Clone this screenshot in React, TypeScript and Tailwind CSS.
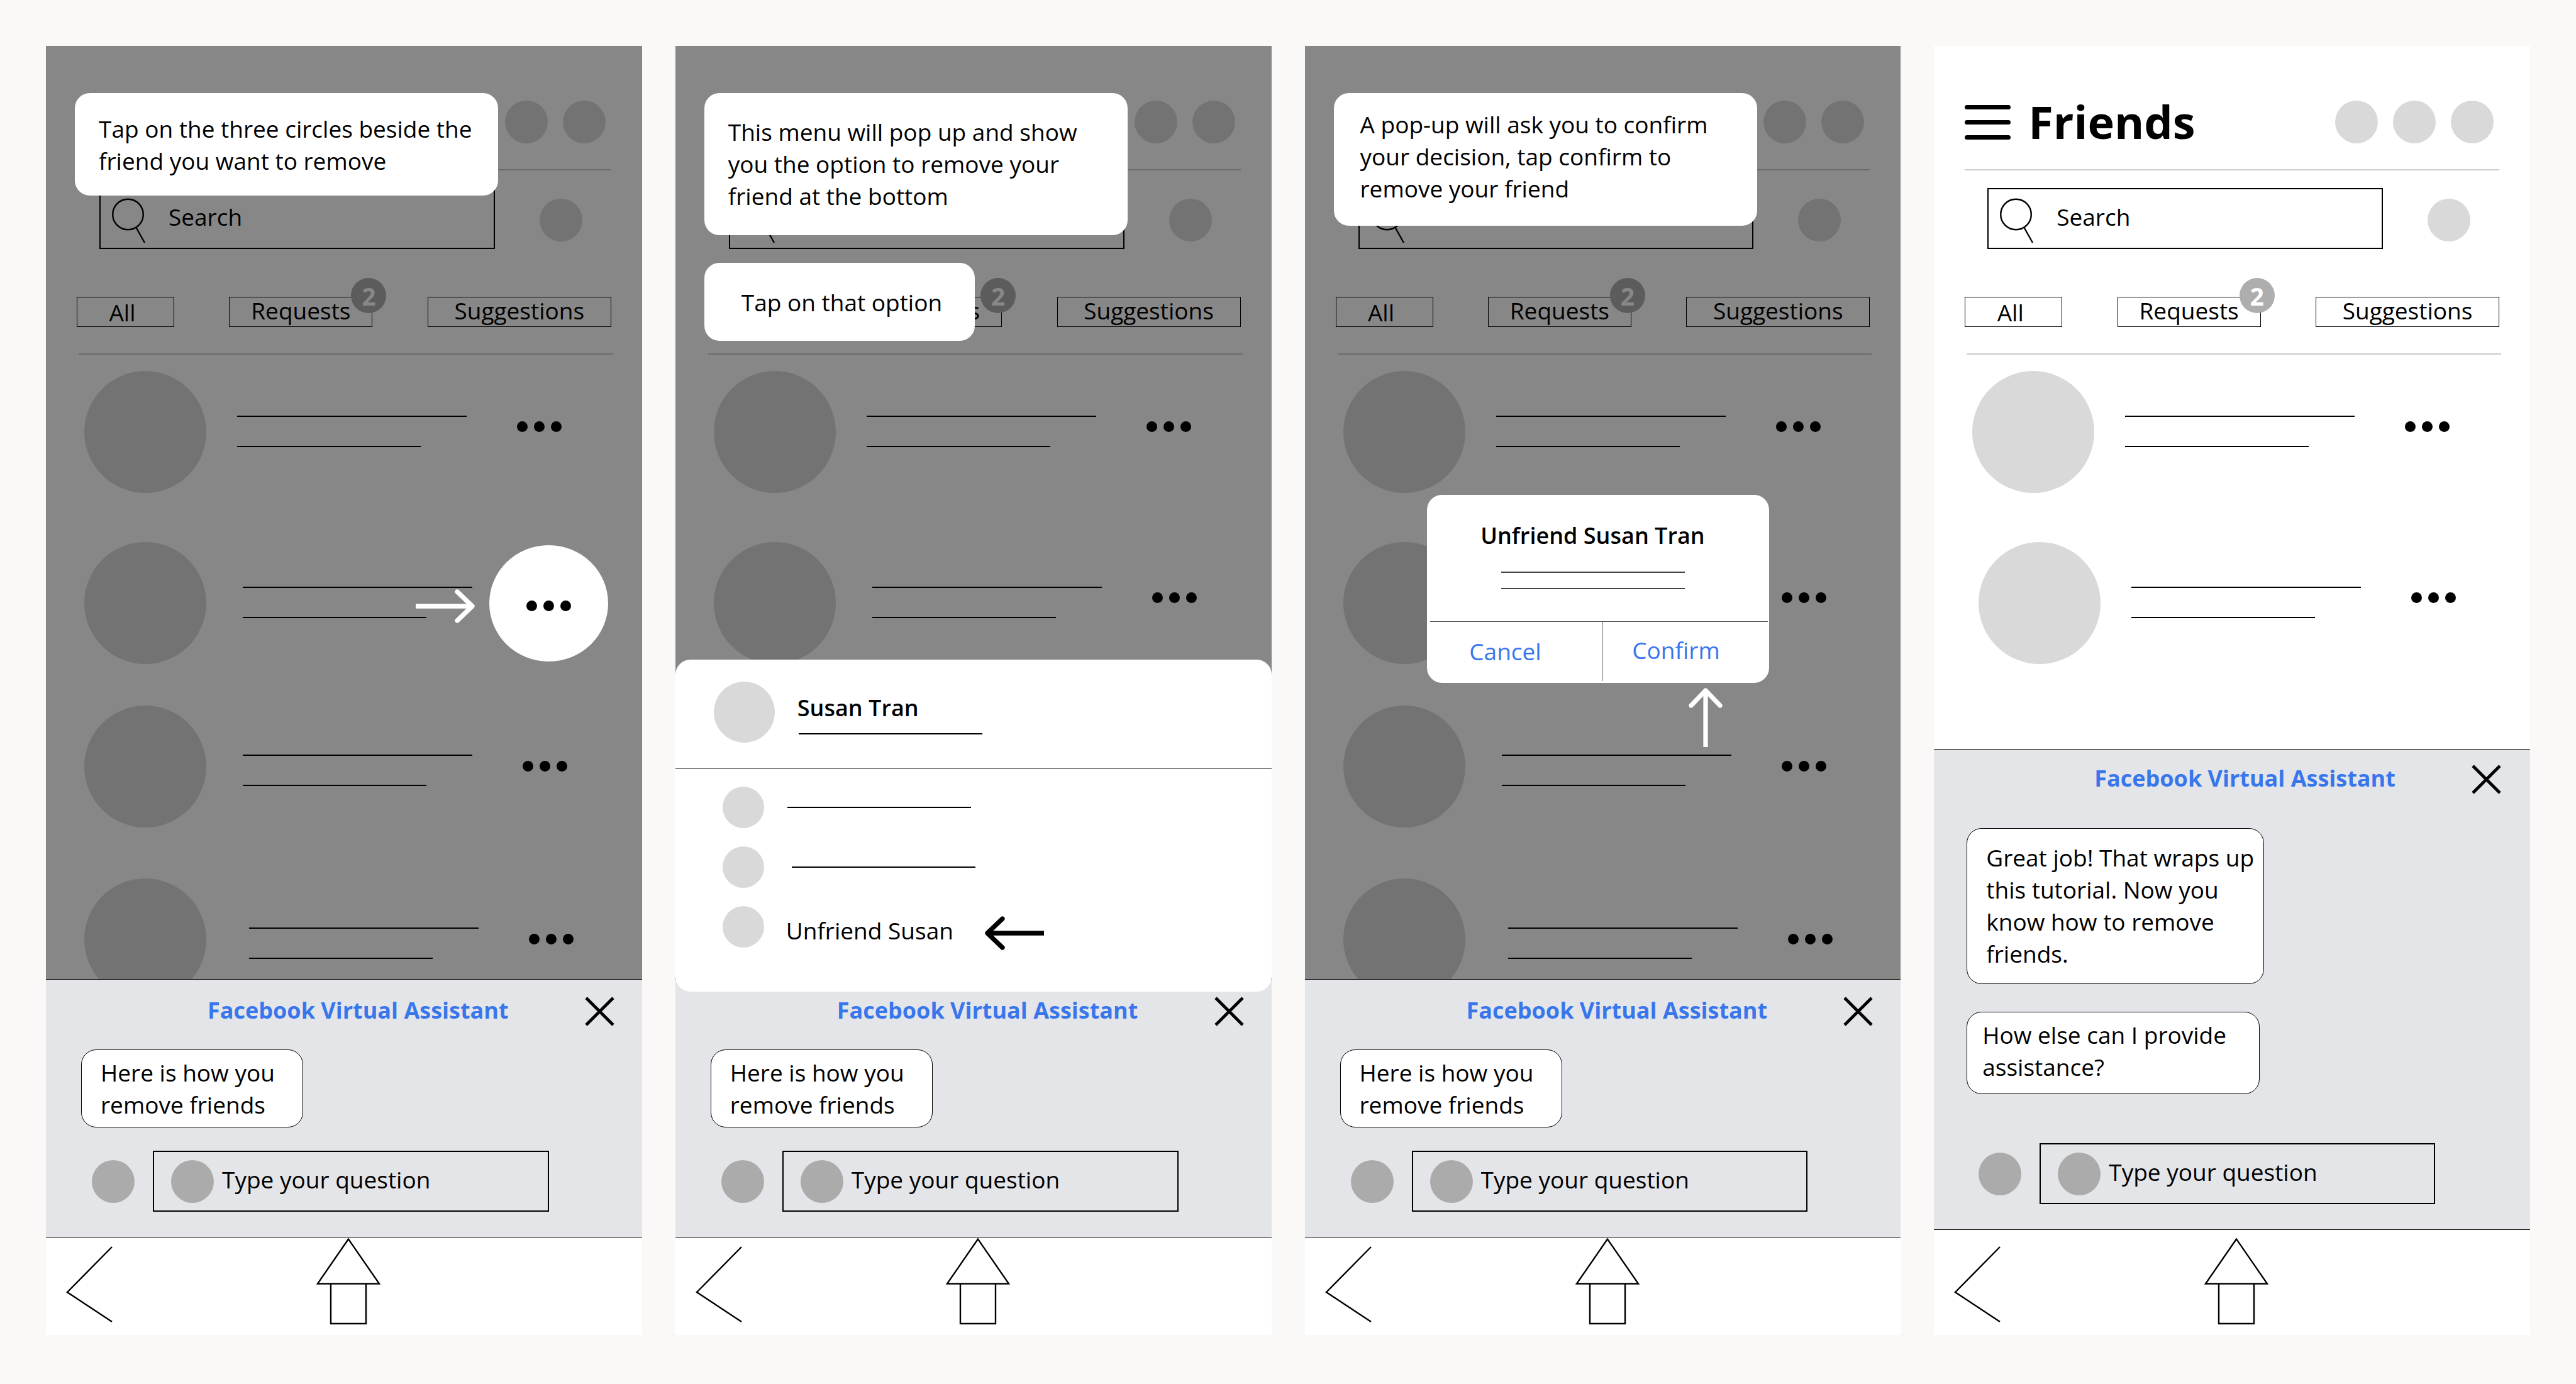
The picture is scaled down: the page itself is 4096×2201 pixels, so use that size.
import { type ReactNode } from "react";

type RowSpec = { row: string; textGap: string; textTop: string; dots: string };

const feedRows: RowSpec[] = [
  { row: "ml-[61px] mt-[26px]", textGap: "ml-[49px]", textTop: "mt-[71px]", dots: "mt-[80px]" },
  { row: "ml-[61px] mt-[78px]", textGap: "ml-[58px]", textTop: "mt-[71px]", dots: "mt-[80px]" },
  { row: "ml-[61px] mt-[66px]", textGap: "ml-[58px]", textTop: "mt-[78px]", dots: "mt-[88px]" },
  { row: "ml-[61px] mt-[81px]", textGap: "ml-[68px]", textTop: "mt-[78px]", dots: "mt-[88px]" },
];

const finalRows: RowSpec[] = [
  feedRows[0],
  { row: "ml-[71px] mt-[78px]", textGap: "ml-[49px]", textTop: "mt-[71px]", dots: "mt-[80px]" },
];

function Dots() {
  return (
    <span className="flex gap-[10px]">
      <span className="size-[17px] rounded-full bg-black" />
      <span className="size-[17px] rounded-full bg-black" />
      <span className="size-[17px] rounded-full bg-black" />
    </span>
  );
}

function Arrow({ direction, className }: { direction: "left" | "right" | "up"; className: string }) {
  const up = direction === "up";
  const shaft = { right: "M0 27H90", left: "M94 27H4", up: "M27 94V4" }[direction];
  const head = {
    right: "M66 4L90 27L66 50",
    left: "M28 4L4 27L28 50",
    up: "M4 28L27 4L50 28",
  }[direction];
  return (
    <svg
      aria-hidden="true"
      width={up ? 54 : 94}
      height={up ? 94 : 54}
      viewBox={up ? "0 0 54 94" : "0 0 94 54"}
      fill="none"
      stroke="currentColor"
      strokeWidth="7.3"
      className={className}
    >
      <path d={shaft} />
      <path d={head} strokeLinecap="round" strokeLinejoin="round" />
    </svg>
  );
}

function FeedHeader({ titled }: { titled: boolean }) {
  return (
    <header>
      <div className="flex h-[68px] items-center pl-[49px] pr-[58px]">
        {titled && (
          <>
            <button type="button" aria-label="Menu" className="flex w-[73px] flex-col gap-[17px]">
              <span className="h-[7px] rounded-full bg-black" />
              <span className="h-[7px] rounded-full bg-black" />
              <span className="h-[7px] rounded-full bg-black" />
            </button>
            <h1 className="ml-[28px] pb-[2px] text-[72px] leading-[66px] font-bold">Friends</h1>
          </>
        )}
        <div className="ml-auto flex gap-[24px]">
          <span className="size-[68px] rounded-full bg-[#d9d9d9]" />
          <span className="size-[68px] rounded-full bg-[#d9d9d9]" />
          <span className="size-[68px] rounded-full bg-[#d9d9d9]" />
        </div>
      </div>
      <div className="mx-[49px] mt-[41px] h-[2px] bg-[#c9ccd1]" />
    </header>
  );
}

function SearchRow() {
  return (
    <div className="mt-[28px] flex items-center gap-[71px] pl-[85px] pr-[95px]">
      <label className="flex h-[97px] flex-1 items-center border-2 border-black pl-[18px]">
        <svg aria-hidden="true" width="54" height="78" viewBox="0 0 54 78" fill="none" stroke="#000" strokeWidth="2.4" className="shrink-0">
          <circle cx="25.5" cy="32" r="24.3" />
          <path d="M38 52L52 77" />
        </svg>
        <input
          type="text"
          aria-label="Search"
          placeholder="Search"
          className="ml-[36px] min-w-0 flex-1 bg-transparent pb-[6px] leading-[51px] outline-none placeholder:text-black placeholder:opacity-100"
        />
      </label>
      <span className="mt-[5px] size-[68px] rounded-full bg-[#d9d9d9]" />
    </div>
  );
}

function FilterTabs() {
  return (
    <nav className="mx-[49px] mt-[76px] flex justify-between">
      <button type="button" className="flex h-[48px] w-[155px] items-center justify-center border border-black pr-[10px]">
        All
      </button>
      <button type="button" className="relative flex h-[48px] w-[228px] items-center justify-center border border-black pb-[5px]">
        Requests
        <span className="absolute -top-[31px] -right-[23px] flex size-[56px] items-center justify-center rounded-full bg-[#aeaeae] text-[39px] font-bold text-white">
          2
        </span>
      </button>
      <button type="button" className="flex h-[48px] w-[292px] items-center justify-center border border-black pb-[5px]">
        Suggestions
      </button>
    </nav>
  );
}

function FriendRow({ spec }: { spec: RowSpec }) {
  return (
    <li className={`flex items-start ${spec.row}`}>
      <span className="size-[194px] shrink-0 rounded-full bg-[#d9d9d9]" />
      <span className={`w-[365px] shrink-0 ${spec.textGap} ${spec.textTop}`}>
        <span className="block h-[2px] bg-black" />
        <span className="mt-[46px] block h-[2px] w-[292px] bg-black" />
      </span>
      <button type="button" aria-label="More options" className={`ml-[80px] ${spec.dots}`}>
        <Dots />
      </button>
    </li>
  );
}

/* When dimmed, a veil darkens the feed while pure black strokes and text keep their colour. */
function Feed({ rows, dimmed = false }: { rows: RowSpec[]; dimmed?: boolean }) {
  return (
    <div className="relative min-h-0 flex-1 overflow-hidden bg-white pt-[87px]">
      <FeedHeader titled={!dimmed} />
      <SearchRow />
      <FilterTabs />
      <div className="mt-[42px] mr-[46px] ml-[52px] h-[2px] bg-[#c9ccd1]" />
      <ul>
        {rows.map((spec, i) => (
          <FriendRow key={i} spec={spec} />
        ))}
      </ul>
      {dimmed && <div className="absolute inset-0 bg-black/47" />}
    </div>
  );
}

function AssistantTitle({ className }: { className: string }) {
  return (
    <div className={`flex items-end justify-between ${className}`}>
      <h2 className="text-[36px] leading-[51px] font-bold text-[#3876ec]">Facebook Virtual Assistant</h2>
      <button type="button" aria-label="Close assistant">
        <svg aria-hidden="true" width="47" height="47" viewBox="0 0 47 47" fill="none" stroke="#000" strokeWidth="4.8">
          <path d="M2 2L45 45M45 2L2 45" />
        </svg>
      </button>
    </div>
  );
}

function Bubble({ className, children }: { className: string; children: ReactNode }) {
  return <p className={`rounded-[24px] border border-black bg-white leading-[51px] ${className}`}>{children}</p>;
}

function QuestionRow({ className }: { className: string }) {
  return (
    <div className={`flex items-center gap-[29px] ${className}`}>
      <span className="size-[68px] shrink-0 rounded-full bg-[#ababab]" />
      <label className="flex h-[97px] flex-1 items-center border-2 border-black pl-[27px]">
        <span className="size-[68px] shrink-0 rounded-full bg-[#ababab]" />
        <input
          type="text"
          aria-label="Type your question"
          placeholder="Type your question"
          className="ml-[13px] min-w-0 flex-1 bg-transparent pb-[6px] leading-[51px] outline-none placeholder:text-black placeholder:opacity-100"
        />
      </label>
    </div>
  );
}

function GuideAssistant() {
  return (
    <aside className="shrink-0 border-y border-black bg-[#e4e5e9] pt-[23px] pb-[40px]">
      <AssistantTitle className="pr-[44px] pl-[257px]" />
      <Bubble className="mt-[37px] ml-[56px] w-[353px] pt-[10px] pb-[10px] pl-[30px]">
        Here is how you
        <br />
        remove friends
      </Bubble>
      <QuestionRow className="mt-[37px] pr-[148px] pl-[73px]" />
    </aside>
  );
}

function ClosingAssistant() {
  return (
    <aside className="shrink-0 border-y border-black bg-[#e4e5e9] pt-[20px] pb-[40px]">
      <AssistantTitle className="pr-[46px] pl-[255px]" />
      <Bubble className="mt-[54px] ml-[52px] w-[473px] pt-[20px] pb-[22px] pl-[30px]">
        Great job! That wraps up
        <br />
        this tutorial. Now you
        <br />
        know how to remove
        <br />
        friends.
      </Bubble>
      <Bubble className="mt-[44px] ml-[52px] w-[466px] pt-[10px] pb-[17px] pl-[24px]">
        How else can I provide
        <br />
        assistance?
      </Bubble>
      <QuestionRow className="mt-[78px] pr-[151px] pl-[71px]" />
    </aside>
  );
}

function SystemNav({ className }: { className: string }) {
  return (
    <nav className={`flex shrink-0 items-end bg-white pb-[16px] pl-[32px] ${className}`}>
      <button type="button" aria-label="Back">
        <svg aria-hidden="true" width="74" height="126" viewBox="0 0 74 126" fill="none" stroke="#000" strokeWidth="2.4">
          <path d="M73 2L2 74L73 121" />
        </svg>
      </button>
      <button type="button" aria-label="Home" className="ml-[322px]">
        <svg aria-hidden="true" width="106" height="139" viewBox="0 0 106 139" fill="none" stroke="#000" strokeWidth="2.4">
          <path d="M53 2.500L4 73.500H102Z" />
          <path d="M25 73.500V137H81V73.500" />
        </svg>
      </button>
    </nav>
  );
}

function Tooltip({ className, children }: { className: string; children: ReactNode }) {
  return (
    <p role="note" className={`absolute left-[46px] rounded-[24px] bg-white leading-[51px] ${className}`}>
      {children}
    </p>
  );
}

function Screen({ label, children }: { label: string; children: ReactNode }) {
  return (
    <section aria-label={label} className="relative flex min-h-0 min-w-0 flex-col overflow-hidden">
      {children}
    </section>
  );
}

function FriendSheet() {
  return (
    <div role="menu" aria-label="Susan Tran" className="absolute inset-x-0 top-[976px] rounded-[24px] bg-white pb-[70px]">
      <div className="flex items-start border-b border-[#444444] pt-[35px] pb-[41px] pl-[61px]">
        <span className="size-[97px] rounded-full bg-[#d9d9d9]" />
        <div className="ml-[36px] pt-[16px]">
          <h3 className="text-[36px] leading-[51px] font-semibold">Susan Tran</h3>
          <div className="mt-[15px] ml-[2px] h-[2px] w-[292px] bg-black" />
        </div>
      </div>
      <div className="mt-[28px] flex flex-col gap-[29px] pl-[75px]">
        <div className="flex items-center">
          <span className="size-[66px] rounded-full bg-[#d9d9d9]" />
          <span className="ml-[37px] h-[2px] w-[292px] bg-black" />
        </div>
        <div className="flex items-center">
          <span className="size-[66px] rounded-full bg-[#d9d9d9]" />
          <span className="ml-[44px] h-[2px] w-[292px] bg-black" />
        </div>
        <div className="flex h-[66px] items-center">
          <span className="size-[66px] rounded-full bg-[#d9d9d9]" />
          <button type="button" role="menuitem" className="ml-[35px] w-[262px] pt-[11px] text-left leading-[51px] whitespace-nowrap">
            Unfriend Susan
          </button>
          <Arrow direction="left" className="mt-[20px] ml-[54px] shrink-0 text-black" />
        </div>
      </div>
    </div>
  );
}

function ConfirmDialog() {
  return (
    <div role="dialog" aria-label="Unfriend Susan Tran" className="absolute top-[714px] left-[194px] w-[544px] rounded-[24px] bg-white">
      <div className="flex flex-col items-center pt-[39px] pr-[16px]">
        <h3 className="text-[36px] leading-[51px] font-semibold">Unfriend Susan Tran</h3>
        <div className="mt-[32px] h-[2px] w-[292px] bg-[#444444]" />
        <div className="mt-[24px] h-[2px] w-[292px] bg-[#444444]" />
      </div>
      <div className="mt-[51px] mr-[2px] ml-[5px] h-px bg-[#444444]" />
      <div className="flex h-[97px] items-stretch text-[#3876ec]">
        <button type="button" className="w-[278px] pr-[28px] pb-[5px]">
          Cancel
        </button>
        <div className="mb-[3px] w-px bg-[#444444]" />
        <button type="button" className="flex-1 pr-[30px] pb-[9px]">
          Confirm
        </button>
      </div>
    </div>
  );
}

export default function App() {
  return (
    <main className="grid h-screen grid-cols-4 grid-rows-1 gap-[53px] bg-[#faf9f7] px-[73px] pt-[73px] pb-[78px] font-['Open_Sans',sans-serif] text-[37px] leading-[51px] text-black">
      <Screen label="Step one">
        <Feed rows={feedRows} dimmed />
        <GuideAssistant />
        <SystemNav className="h-[155px]" />
        <Tooltip className="top-[75px] w-[673px] pt-[31px] pb-[30px] pl-[38px]">
          Tap on the three circles beside the
          <br />
          friend you want to remove
        </Tooltip>
        <Arrow direction="right" className="absolute top-[864px] left-[588px] text-white" />
        <button
          type="button"
          aria-label="Options for Susan Tran"
          className="absolute top-[794px] left-[705px] flex h-[185px] w-[189px] items-center justify-center rounded-[50%] bg-white pt-[8px]"
        >
          <Dots />
        </button>
      </Screen>

      <Screen label="Step two">
        <Feed rows={feedRows} dimmed />
        <GuideAssistant />
        <SystemNav className="h-[155px]" />
        <Tooltip className="top-[75px] w-[673px] pt-[36px] pb-[37px] pl-[38px]">
          This menu will pop up and show
          <br />
          you the option to remove your
          <br />
          friend at the bottom
        </Tooltip>
        <Tooltip className="top-[345px] w-[430px] pt-[37px] pb-[36px] pl-[59px]">Tap on that option</Tooltip>
        <FriendSheet />
      </Screen>

      <Screen label="Step three">
        <Feed rows={feedRows} dimmed />
        <GuideAssistant />
        <SystemNav className="h-[155px]" />
        <Tooltip className="top-[75px] w-[673px] pt-[24px] pb-[34px] pl-[42px]">
          A pop-up will ask you to confirm
          <br />
          your decision, tap confirm to
          <br />
          remove your friend
        </Tooltip>
        <ConfirmDialog />
        <Arrow direction="up" className="absolute top-[1021px] left-[610px] text-white" />
      </Screen>

      <Screen label="Finished">
        <Feed rows={finalRows} />
        <ClosingAssistant />
        <SystemNav className="h-[167px]" />
      </Screen>
    </main>
  );
}
